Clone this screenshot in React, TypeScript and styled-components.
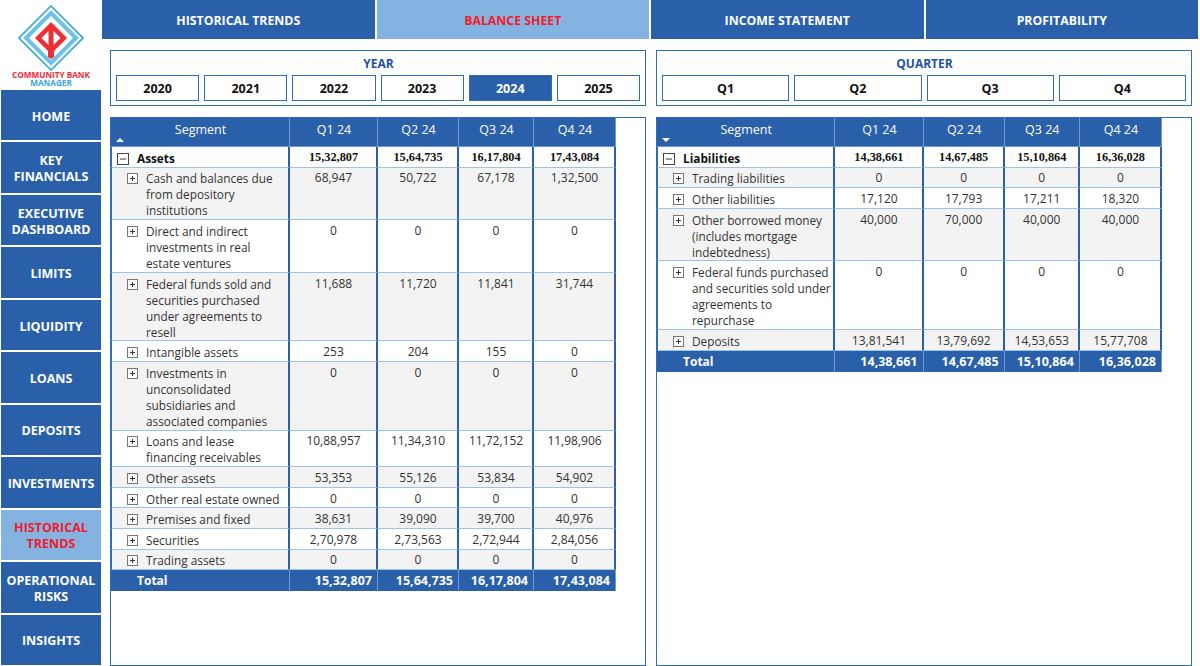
import React from "react";
import styled, { createGlobalStyle } from "styled-components";

const BLUE = "#2a60aa";
const PALE = "#85b3e1";
const LINE = "#2f6db8";
const FONT = `"Open Sans", "Noto Sans", sans-serif`;

const GlobalStyle = createGlobalStyle`
  html, body {
    margin: 0;
    padding: 0;
    background: #fff;
  }
  * {
    box-sizing: border-box;
  }
`;

const Page = styled.div`
  width: 1200px;
  height: 666px;
  display: flex;
  overflow: hidden;
  font-family: ${FONT};
`;

const Sidebar = styled.aside`
  width: 102px;
  padding: 0 1px 1px 1px;
  display: flex;
  flex-direction: column;
`;

const LogoBox = styled.div`
  height: 90px;
  display: flex;
  flex-direction: column;
  align-items: center;
`;

const LogoTop = styled.div`
  color: #ee2d3d;
  font-size: 8.2px;
  font-weight: 700;
  line-height: 8px;
  white-space: nowrap;
`;

const LogoBottom = styled(LogoTop)`
  color: #3aa5dc;
`;

const Nav = styled.nav`
  flex: 1;
  display: flex;
  flex-direction: column;
  gap: 2.2px;
`;

const NavItem = styled.div<{ $active?: boolean }>`
  flex: 1;
  display: flex;
  align-items: center;
  justify-content: center;
  padding-top: 3px;
  text-align: center;
  background: ${(p) => (p.$active ? PALE : BLUE)};
  color: ${(p) => (p.$active ? "#f01c2a" : "#fff")};
  font-size: 12.5px;
  font-weight: 700;
  line-height: 16px;
`;

const NavLabel = styled.span`
  max-width: 92px;
`;

const Main = styled.main`
  flex: 1;
  display: flex;
  flex-direction: column;
  min-width: 0;
`;

const Tabs = styled.div`
  height: 39px;
  padding-right: 2px;
  display: grid;
  grid-template-columns: repeat(4, 1fr);
  gap: 2px;
`;

const Tab = styled.div<{ $active?: boolean }>`
  display: flex;
  align-items: center;
  justify-content: center;
  padding-top: 2px;
  background: ${(p) => (p.$active ? PALE : BLUE)};
  color: ${(p) => (p.$active ? "#f01c2a" : "#fff")};
  font-size: 12.3px;
  font-weight: 700;
`;

const Content = styled.div`
  flex: 1;
  min-height: 0;
  padding: 11px 8px 0 8px;
  display: grid;
  grid-template-columns: 536px 536px;
  grid-template-rows: 56px 1fr;
  column-gap: 10px;
  row-gap: 11px;
`;

const SlicerPanel = styled.section`
  border: 1px solid ${LINE};
  padding: 4px 5px;
  display: flex;
  flex-direction: column;
`;

const SlicerTitle = styled.div`
  height: 20px;
  padding-left: 1px;
  line-height: 17px;
  text-align: center;
  color: #1f50a6;
  font-size: 12px;
  font-weight: 700;
`;

const SlicerRow = styled.div`
  flex: 1;
  display: flex;
  gap: 5px;
`;

const SlicerButton = styled.div<{ $selected?: boolean }>`
  flex: 1;
  display: flex;
  align-items: center;
  justify-content: center;
  border: 1px solid ${LINE};
  background: ${(p) => (p.$selected ? BLUE : "#fff")};
  color: ${(p) => (p.$selected ? "#fff" : "#111")};
  font-size: 12.5px;
  font-weight: 700;
`;

const TablePanel = styled.section`
  border: 1px solid ${LINE};
  min-height: 0;
`;

const Grid = styled.table`
  border-collapse: separate;
  border-spacing: 0;
  table-layout: fixed;
  width: 505px;
  font-size: 12px;
  color: #333;
`;

const HeadCell = styled.th`
  position: relative;
  height: 29px;
  padding: 3px 0 0 1px;
  vertical-align: top;
  background: ${BLUE};
  border-right: 1px solid #6d9ad4;
  border-bottom: 1px solid #6d9ad4;
  color: #fff;
  font-size: 12.5px;
  font-weight: 400;
  line-height: 17px;
`;

const SortMark = styled.span<{ $down?: boolean }>`
  position: absolute;
  left: 5px;
  bottom: 4px;
  width: 0;
  height: 0;
  border-left: 4px solid transparent;
  border-right: 4px solid transparent;
  ${(p) => (p.$down ? "border-top: 4px solid #fff;" : "border-bottom: 4px solid #fff;")}
`;

const Row = styled.tr<{ $shaded?: boolean }>`
  background: ${(p) => (p.$shaded ? "#f3f3f3" : "#fff")};
`;

const LabelCell = styled.td<{ $bold?: boolean }>`
  padding: ${(p) => (p.$bold ? "2.6px 4px 1px 5px" : "2.8px 2px 0.8px 15px")};
  vertical-align: top;
  font-size: 11.8px;
  line-height: 16px;
  border-bottom: 1px solid #9cc4ea;
  border-left: 1px solid ${LINE};
  border-right: 2px solid ${BLUE};
  font-weight: ${(p) => (p.$bold ? 700 : 400)};
  color: ${(p) => (p.$bold ? "#111" : "#333")};
`;

const LabelWrap = styled.div`
  display: flex;
  gap: 8px;
`;

const ValueCell = styled.td`
  padding: 2.8px 0 0.8px 1px;
  vertical-align: top;
  text-align: center;
  line-height: 16px;
  border-bottom: 1px solid #9cc4ea;
  border-right: 2px solid ${BLUE};
`;

const SerifValue = styled(ValueCell)`
  padding: 1.8px 0 1.8px 1px;
  font-family: "Liberation Serif", serif;
  font-size: 12.3px;
  font-weight: 700;
  color: #111;
`;

const TotalLabel = styled.td`
  height: 21px;
  padding: 0 0 0 26px;
  background: ${BLUE};
  color: #fff;
  font-size: 12px;
  font-weight: 700;
  border-right: 1px solid #6d9ad4;
`;

const TotalValue = styled.td`
  height: 21px;
  padding: 0 5px 0 0;
  text-align: right;
  background: ${BLUE};
  color: #fff;
  font-size: 12.5px;
  font-weight: 700;
  border-right: 1px solid #6d9ad4;
`;

const ToggleSvg = styled.svg`
  flex: none;
  margin-top: 3px;
`;

const Toggle = ({ open }: { open?: boolean }) => {
  const size = open ? 12 : 11;
  const mid = size / 2;
  return (
    <ToggleSvg width={size} height={size} viewBox={`0 0 ${size} ${size}`}>
      <rect x="0.5" y="0.5" width={size - 1} height={size - 1} fill="#fff" stroke={open ? "#444" : "#777"} />
      <path d={`M3 ${mid}H${size - 3}`} stroke="#333" fill="none" />
      {!open && <path d={`M${mid} 3V${size - 3}`} stroke="#333" fill="none" />}
    </ToggleSvg>
  );
};

const Logo = () => (
  <svg width="66" height="66" viewBox="0 0 66 66" style={{ flex: "none", marginTop: 5 }}>
    <path d="M33 1L65 33L33 65L1 33Z" fill="#fff" stroke="#2ea7df" strokeWidth="1.6" />
    <path d="M33 8L58 33L33 58L8 33Z" fill="#fff" stroke="#6cc1ea" strokeWidth="4" />
    <path d="M33 17L49 33L36 46V52L33 54L30 52V46L17 33Z" fill="#ec2f35" />
    <path d="M30.5 26V40L23.5 33Z" fill="#fff" />
    <path d="M35.5 26V40L42.5 33Z" fill="#fff" />
  </svg>
);

type Line = { label: string; values: string[] };
type Sheet = {
  title: string;
  down?: boolean;
  widths: number[];
  totals: string[];
  lines: Line[];
};

const assets: Sheet = {
  title: "Assets",
  widths: [179, 88, 81, 75, 82],
  totals: ["15,32,807", "15,64,735", "16,17,804", "17,43,084"],
  lines: [
    { label: "Cash and balances due from depository institutions", values: ["68,947", "50,722", "67,178", "1,32,500"] },
    { label: "Direct and indirect investments in real estate ventures", values: ["0", "0", "0", "0"] },
    { label: "Federal funds sold and securities purchased under agreements to resell", values: ["11,688", "11,720", "11,841", "31,744"] },
    { label: "Intangible assets", values: ["253", "204", "155", "0"] },
    { label: "Investments in unconsolidated subsidiaries and associated companies", values: ["0", "0", "0", "0"] },
    { label: "Loans and lease financing receivables", values: ["10,88,957", "11,34,310", "11,72,152", "11,98,906"] },
    { label: "Other assets", values: ["53,353", "55,126", "53,834", "54,902"] },
    { label: "Other real estate owned", values: ["0", "0", "0", "0"] },
    { label: "Premises and fixed", values: ["38,631", "39,090", "39,700", "40,976"] },
    { label: "Securities", values: ["2,70,978", "2,73,563", "2,72,944", "2,84,056"] },
    { label: "Trading assets", values: ["0", "0", "0", "0"] },
  ],
};

const liabilities: Sheet = {
  title: "Liabilities",
  down: true,
  widths: [178, 88, 81, 75, 82],
  totals: ["14,38,661", "14,67,485", "15,10,864", "16,36,028"],
  lines: [
    { label: "Trading liabilities", values: ["0", "0", "0", "0"] },
    { label: "Other liabilities", values: ["17,120", "17,793", "17,211", "18,320"] },
    { label: "Other borrowed money (includes mortgage indebtedness)", values: ["40,000", "70,000", "40,000", "40,000"] },
    { label: "Federal funds purchased and securities sold under agreements to repurchase", values: ["0", "0", "0", "0"] },
    { label: "Deposits", values: ["13,81,541", "13,79,692", "14,53,653", "15,77,708"] },
  ],
};

const quarters = ["Q1 24", "Q2 24", "Q3 24", "Q4 24"];

const SheetTable = ({ sheet }: { sheet: Sheet }) => (
  <Grid>
    <colgroup>
      {sheet.widths.map((w, i) => (
        <col key={i} width={w} />
      ))}
    </colgroup>
    <thead>
      <tr>
        <HeadCell>
          Segment
          <SortMark $down={sheet.down} />
        </HeadCell>
        {quarters.map((q) => (
          <HeadCell key={q}>{q}</HeadCell>
        ))}
      </tr>
    </thead>
    <tbody>
      <Row>
        <LabelCell $bold>
          <LabelWrap>
            <Toggle open />
            <span>{sheet.title}</span>
          </LabelWrap>
        </LabelCell>
        {sheet.totals.map((t, i) => (
          <SerifValue key={i}>{t}</SerifValue>
        ))}
      </Row>
      {sheet.lines.map((line, i) => (
        <Row key={line.label} $shaded={i % 2 === 0}>
          <LabelCell>
            <LabelWrap>
              <Toggle />
              <span>{line.label}</span>
            </LabelWrap>
          </LabelCell>
          {line.values.map((v, j) => (
            <ValueCell key={j}>{v}</ValueCell>
          ))}
        </Row>
      ))}
      <tr>
        <TotalLabel>Total</TotalLabel>
        {sheet.totals.map((t, i) => (
          <TotalValue key={i}>{t}</TotalValue>
        ))}
      </tr>
    </tbody>
  </Grid>
);

const navItems = [
  "HOME",
  "KEY FINANCIALS",
  "EXECUTIVE DASHBOARD",
  "LIMITS",
  "LIQUIDITY",
  "LOANS",
  "DEPOSITS",
  "INVESTMENTS",
  "HISTORICAL TRENDS",
  "OPERATIONAL RISKS",
  "INSIGHTS",
];

const tabs = ["HISTORICAL TRENDS", "BALANCE SHEET", "INCOME STATEMENT", "PROFITABILITY"];
const years = ["2020", "2021", "2022", "2023", "2024", "2025"];

const App = () => (
  <Page>
    <GlobalStyle />
    <Sidebar>
      <LogoBox>
        <Logo />
        <LogoTop>COMMUNITY BANK</LogoTop>
        <LogoBottom>MANAGER</LogoBottom>
      </LogoBox>
      <Nav>
        {navItems.map((item) => (
          <NavItem key={item} $active={item === "HISTORICAL TRENDS"}>
            <NavLabel>{item}</NavLabel>
          </NavItem>
        ))}
      </Nav>
    </Sidebar>
    <Main>
      <Tabs>
        {tabs.map((t) => (
          <Tab key={t} $active={t === "BALANCE SHEET"}>
            {t}
          </Tab>
        ))}
      </Tabs>
      <Content>
        <SlicerPanel>
          <SlicerTitle>YEAR</SlicerTitle>
          <SlicerRow>
            {years.map((y) => (
              <SlicerButton key={y} $selected={y === "2024"}>
                {y}
              </SlicerButton>
            ))}
          </SlicerRow>
        </SlicerPanel>
        <SlicerPanel>
          <SlicerTitle>QUARTER</SlicerTitle>
          <SlicerRow>
            {["Q1", "Q2", "Q3", "Q4"].map((q) => (
              <SlicerButton key={q}>{q}</SlicerButton>
            ))}
          </SlicerRow>
        </SlicerPanel>
        <TablePanel>
          <SheetTable sheet={assets} />
        </TablePanel>
        <TablePanel>
          <SheetTable sheet={liabilities} />
        </TablePanel>
      </Content>
    </Main>
  </Page>
);

export default App;
